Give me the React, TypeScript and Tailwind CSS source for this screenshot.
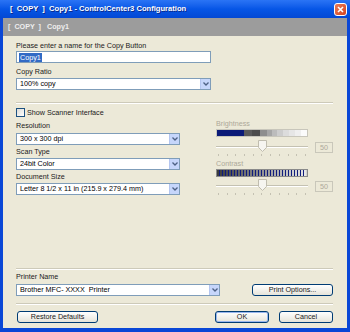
import React from "react"

const font = "font-['Liberation_Sans',Arial,sans-serif]"

const DropArrow = () => (
  <div className="w-[10px] h-full bg-[#c6d6fb] border-l border-[#b4c6f0] flex items-center justify-center shrink-0">
    <svg width="6" height="4" viewBox="0 0 6 4">
      <path d="M0.5 0.5 L3 3 L5.5 0.5" stroke="#4d6185" strokeWidth="1.3" fill="none" />
    </svg>
  </div>
)

const Combo = ({ value, w }: { value: string; w: string }) => (
  <div className={`${w} h-[12px] bg-white border border-[#7f9db9] flex items-stretch overflow-hidden shrink-0`}>
    <span className="flex-1 min-w-0 pl-[3px] text-[7.2px] leading-[10px] text-black whitespace-pre overflow-hidden">{value}</span>
    <DropArrow />
  </div>
)

const Label = ({ text, disabled }: { text: string; disabled?: boolean }) => (
  <div className={`h-[11px] text-[7.2px] leading-[11px] whitespace-pre ${disabled ? "text-[#aca899]" : "text-[#1a1a1a]"}`}>{text}</div>
)

const Sep = () => <div className="h-[2px] border-t border-[#cdcab9] border-b border-b-white" />

const XpButton = ({ text, w, def }: { text: string; w: string; def?: boolean }) => (
  <div
    className={`${w} h-[12px] rounded-[3px] border border-[#003c74] bg-gradient-to-b from-white to-[#e6e4da] flex items-center justify-center text-[7.2px] leading-none text-[#1a1a1a] ${
      def ? "shadow-[inset_0_0_0_1px_#9ab7ee]" : ""
    }`}
  >
    {text}
  </div>
)

const Ticks = () => (
  <div className="h-[2px] w-[92px] flex justify-between px-[2px]">
    {Array.from({ length: 11 }).map((_, i) => (
      <div key={i} className="w-px h-[2px] bg-[#c4c1b2]" />
    ))}
  </div>
)

const Slider = () => (
  <div className="flex items-center h-[13px]">
    <div className="relative w-[92px] h-[13px] flex items-center shrink-0">
      <div className="w-full h-[2px] border-t border-[#c4c1b2] border-b border-b-white" />
      <svg className="absolute left-[42px] top-0" width="9" height="12" viewBox="0 0 9 12">
        <path d="M0.5 0.5 H8.5 V7.5 L4.5 11.5 L0.5 7.5 Z" fill="#f6f5f0" stroke="#c0bdaf" />
      </svg>
    </div>
    <div className="ml-[7px] mt-[2px] w-[18px] h-[11px] border border-[#c9c7ba] flex items-center justify-center text-[7.2px] leading-none text-[#aca899] shrink-0">
      50
    </div>
  </div>
)

const BrightBar = () => {
  const segs: [number, string][] = [
    [27, "#0b1a78"],
    [8, "#5a5a5a"],
    [8, "#4c4c4c"],
    [7, "#8e8e8e"],
    [5, "#a6a6a6"],
    [5, "#bcbcbc"],
    [6, "#cdcdcd"],
    [6, "#dcdcdc"],
    [6, "#e6e6e6"],
    [6, "#efefef"],
    [8, "#fbfbfb"],
  ]
  return (
    <div className="w-[92px] h-[8px] border border-[#c8c6bb] flex overflow-hidden">
      {segs.map(([w, c], i) => (
        <div key={i} className="h-full shrink-0" style={{ width: w, background: c }} />
      ))}
    </div>
  )
}

const ContrastBar = () => {
  const n = 30
  return (
    <svg width="92" height="8" viewBox="0 0 92 8" className="block">
      <rect x="0" y="0" width="92" height="8" fill="#d0d0d0" />
      {Array.from({ length: n }).map((_, i) => {
        const g = Math.round(60 + (i / (n - 1)) * 170)
        return (
          <g key={i}>
            <rect x={1 + i * 3} y="1" width="2" height="6" fill={`rgb(${g},${g},${g})`} />
            <rect x={i * 3} y="1" width="1" height="6" fill="#101c7c" />
          </g>
        )
      })}
      <rect x="0.5" y="0.5" width="91" height="7" fill="none" stroke="#8a8a8a" />
    </svg>
  )
}

export default function App() {
  return (
    <div className={`w-[350px] h-[332px] bg-[#0a47d6] flex flex-col ${font}`}>
      <div className="h-[18px] bg-gradient-to-b from-[#2a74f5] via-[#0656e6] to-[#0348d4] flex items-center justify-between pl-[10px] pr-[3px]">
        <span className="text-[7.6px] font-bold text-white whitespace-pre [text-shadow:1px_1px_0_#0a2a8a]">
          {"[  COPY  ]  Copy1 - ControlCenter3 Configuration"}
        </span>
        <div className="w-[13px] h-[13px] rounded-[3px] border border-white bg-gradient-to-br from-[#ea7a55] to-[#d4431e] flex items-center justify-center">
          <svg width="7" height="7" viewBox="0 0 7 7">
            <path d="M1 1 L6 6 M6 1 L1 6" stroke="white" strokeWidth="1.6" />
          </svg>
        </div>
      </div>
      <div className="flex-1 mx-[3px] mb-[4px] bg-[#ece9d8] flex flex-col">
        <div className="h-[18px] bg-[#9c9c9c] flex items-center pl-[5px]">
          <span className="text-[7.2px] font-bold text-[#eeeeee] whitespace-pre">{"[  COPY  ]   Copy1"}</span>
        </div>
        <div className="flex-1 flex flex-col pl-[13px] pr-[14px]">
          <div className="mt-[4px]">
            <Label text="Please enter a name for the Copy Button" />
          </div>
          <div className="w-[195px] h-[12px] bg-white border border-[#7f9db9] flex items-center pl-[2px]">
            <span className="bg-[#316ac5] text-white text-[7.2px] leading-[9px] px-px">Copy1</span>
          </div>
          <div className="mt-[3px]">
            <Label text="Copy Ratio" />
          </div>
          <div className="mt-[1px]">
            <Combo value="100% copy" w="w-[195px]" />
          </div>
          <div className="mt-[12px]">
            <Sep />
          </div>
          <div className="flex">
            <div className="w-[164px] min-w-0 shrink-0 flex flex-col">
              <div className="mt-[4px] h-[9px] flex items-center gap-[2px]">
                <div className="w-[9px] h-[9px] border border-[#1c5180] bg-gradient-to-br from-[#dcdcd7] to-white" />
                <span className="text-[7.2px] leading-none text-[#1a1a1a]">Show Scanner Interface</span>
              </div>
              <div className="mt-[3px]">
                <Label text="Resolution" />
              </div>
              <div className="mt-[2px]">
                <Combo value="300 x 300 dpi" w="w-[164px]" />
              </div>
              <div className="mt-[1px]">
                <Label text="Scan Type" />
              </div>
              <div className="mt-[1px]">
                <Combo value="24bit Color" w="w-[164px]" />
              </div>
              <div className="mt-[1px]">
                <Label text="Document Size" />
              </div>
              <div className="mt-[1px]">
                <Combo value="Letter 8 1/2 x 11 in (215.9 x 279.4 mm)" w="w-[164px]" />
              </div>
            </div>
            <div className="ml-[36px] flex flex-col">
              <div className="mt-[14px]">
                <Label text="Brightness" disabled />
              </div>
              <BrightBar />
              <div className="mt-[3px]">
                <Slider />
              </div>
              <div className="mt-[1px]">
                <Ticks />
              </div>
              <div className="mt-[2px]">
                <Label text="Contrast" disabled />
              </div>
              <ContrastBar />
              <div className="mt-[2px]">
                <Slider />
              </div>
              <div className="mt-[1px]">
                <Ticks />
              </div>
            </div>
          </div>
          <div className="mt-auto pb-[5px] flex flex-col">
            <Sep />
            <div className="mt-[1px]">
              <Label text="Printer Name" />
            </div>
            <div className="mt-[2px] flex justify-between items-center">
              <Combo value="Brother MFC- XXXX  Printer" w="w-[204px]" />
              <XpButton text="Print Options..." w="w-[81px]" />
            </div>
            <div className="mt-[7px]">
              <Sep />
            </div>
            <div className="mt-[6px] flex items-center">
              <div className="ml-px">
                <XpButton text="Restore Defaults" w="w-[81px]" />
              </div>
              <div className="ml-auto flex gap-[10px]">
                <XpButton text="OK" w="w-[54px]" def />
                <XpButton text="Cancel" w="w-[54px]" />
              </div>
            </div>
          </div>
        </div>
      </div>
    </div>
  )
}
